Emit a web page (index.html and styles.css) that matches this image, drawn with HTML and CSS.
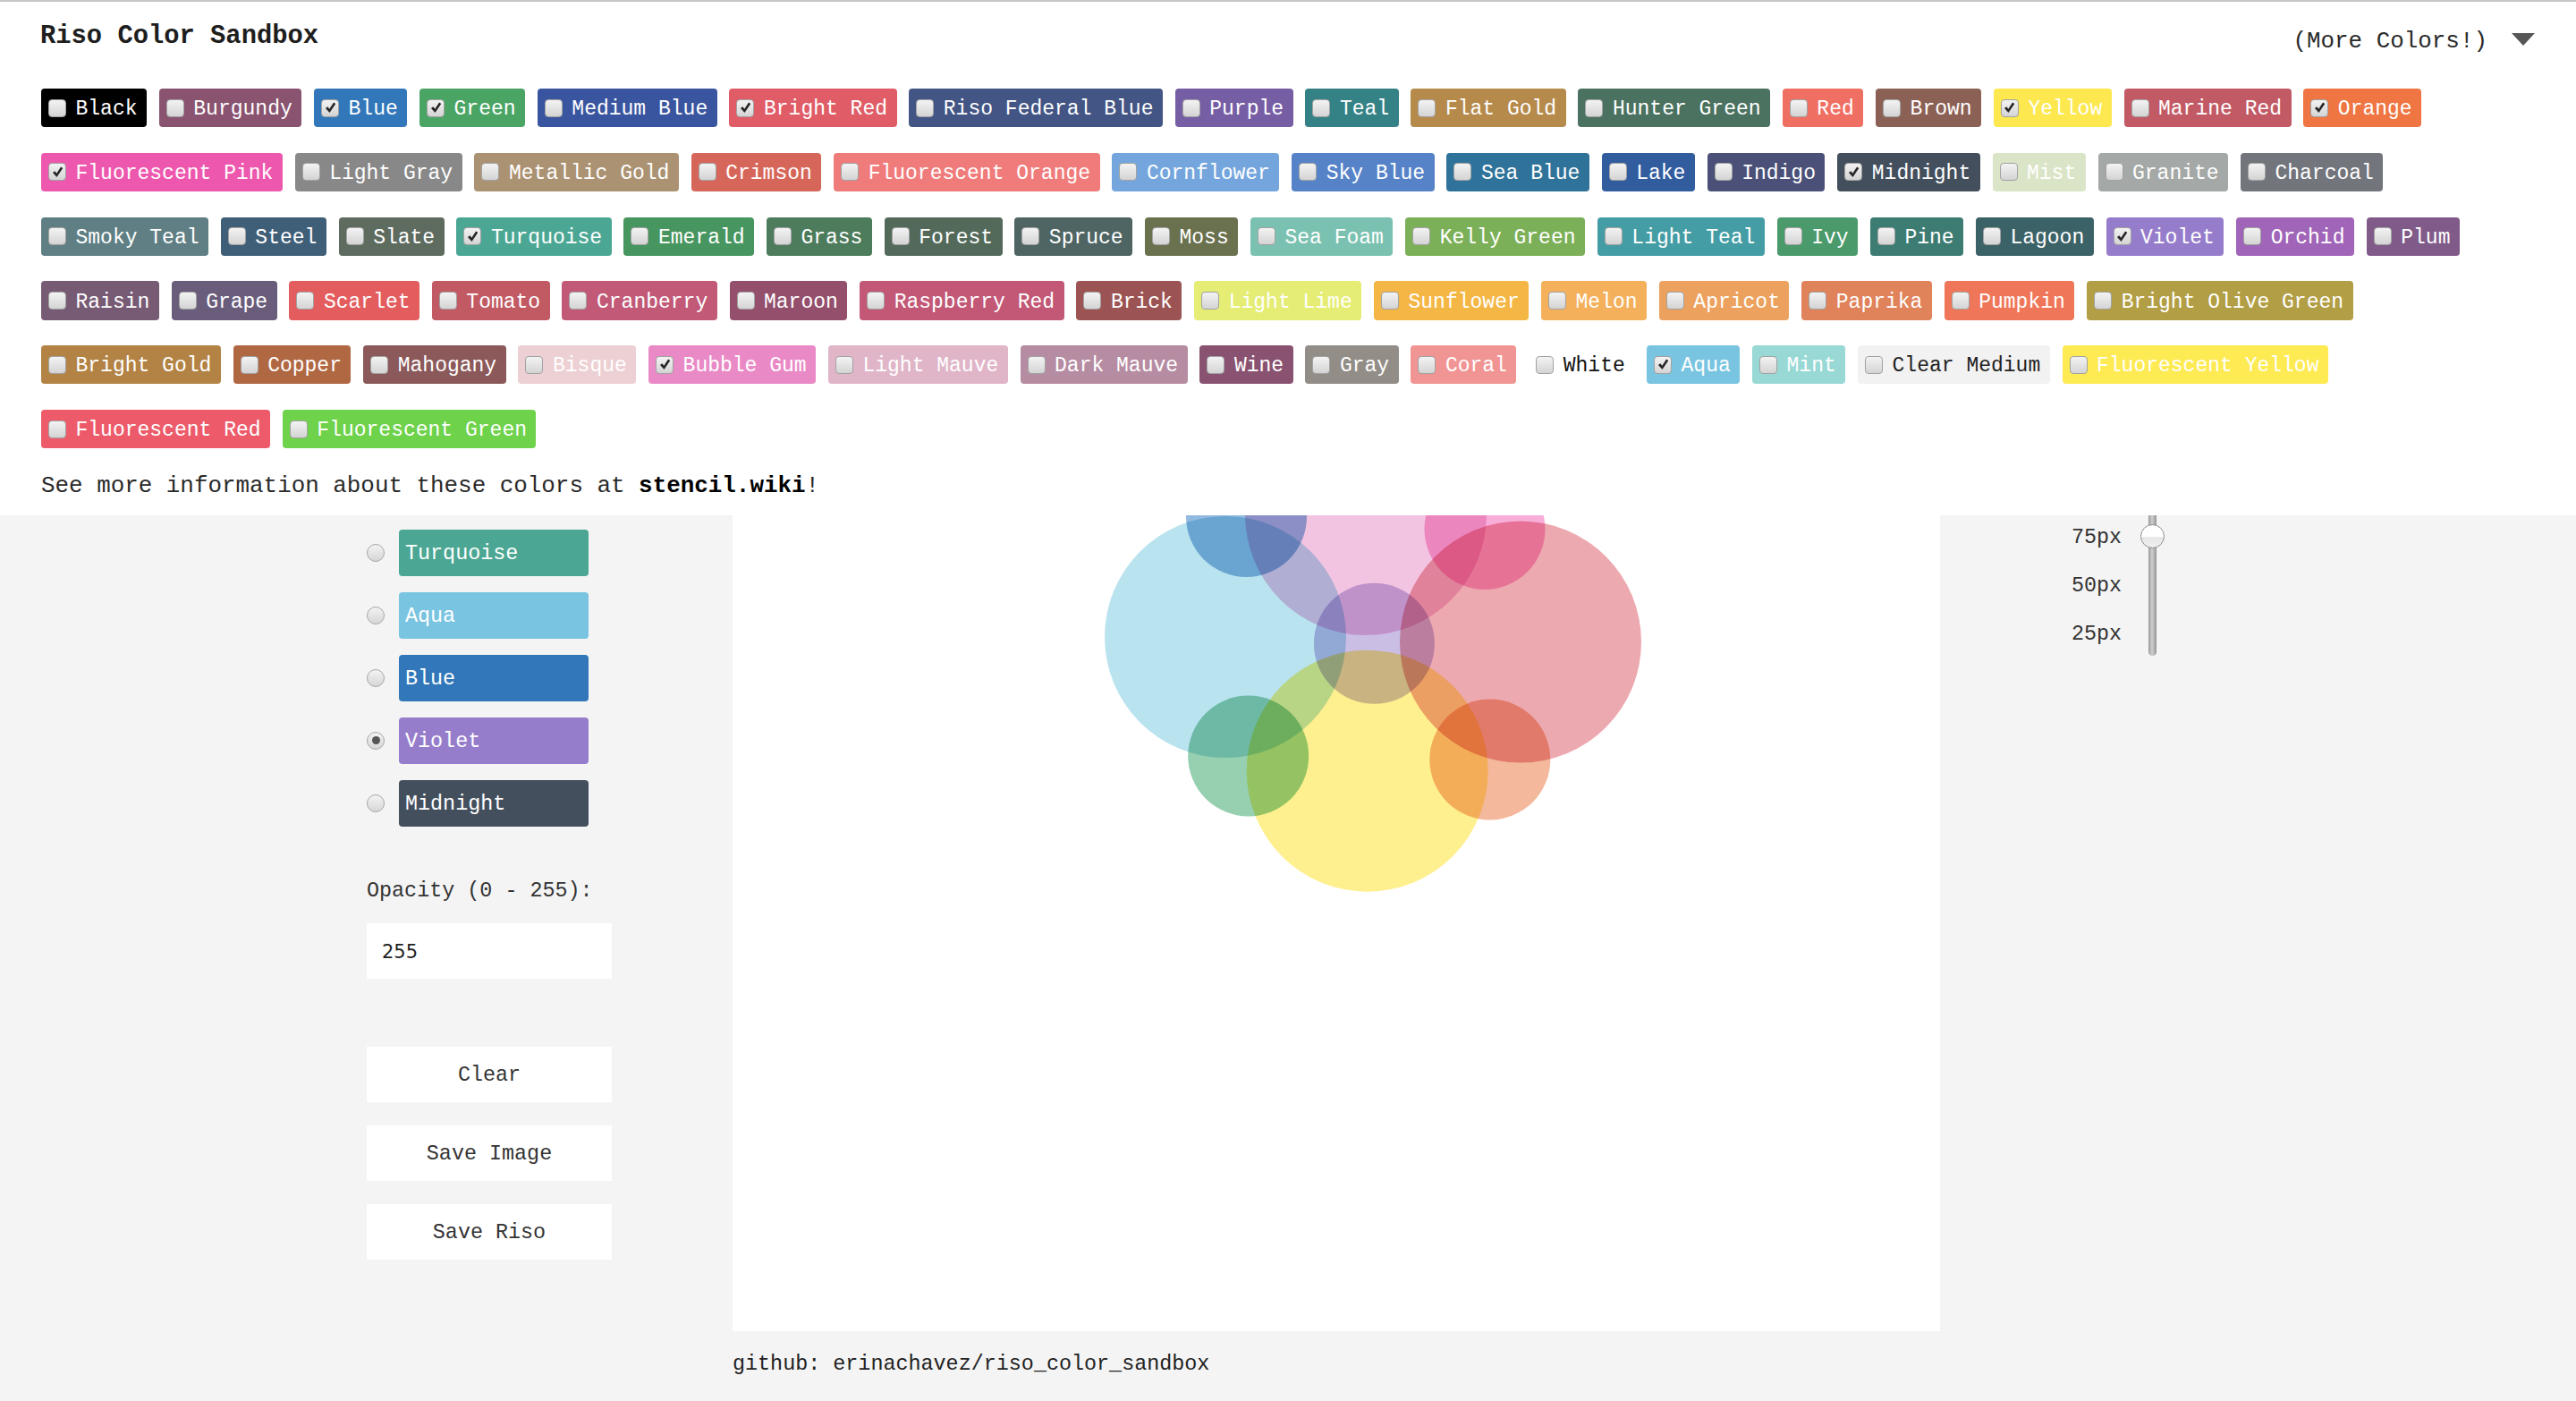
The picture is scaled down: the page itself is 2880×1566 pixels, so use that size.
FILE: index.html
```html
<!DOCTYPE html>
<html lang="en">
<head>
<meta charset="utf-8">
<title>Riso Color Sandbox</title>
<link rel="stylesheet" href="styles.css">
</head>
<body>
<header class="header">
  <div class="top">
    <h1 class="title">Riso Color Sandbox</h1>
    <div class="more"><span class="more-text">(More Colors!)</span><span class="tri"></span></div>
  </div>
  <div class="chips">
    <label class="chip c-black"><span class="cb"></span>Black</label>
    <label class="chip c-burgundy"><span class="cb"></span>Burgundy</label>
    <label class="chip c-blue"><span class="cb on"><svg viewBox="0 0 20 20"><path d="M3.5 10.5 L6.2 8.4 L8.6 11.6 L14.2 2.8 L16.8 4.6 L8.8 16.4 Z"/></svg></span>Blue</label>
    <label class="chip c-green"><span class="cb on"><svg viewBox="0 0 20 20"><path d="M3.5 10.5 L6.2 8.4 L8.6 11.6 L14.2 2.8 L16.8 4.6 L8.8 16.4 Z"/></svg></span>Green</label>
    <label class="chip c-medblue"><span class="cb"></span>Medium Blue</label>
    <label class="chip c-brightred"><span class="cb on"><svg viewBox="0 0 20 20"><path d="M3.5 10.5 L6.2 8.4 L8.6 11.6 L14.2 2.8 L16.8 4.6 L8.8 16.4 Z"/></svg></span>Bright Red</label>
    <label class="chip c-federal"><span class="cb"></span>Riso Federal Blue</label>
    <label class="chip c-purple"><span class="cb"></span>Purple</label>
    <label class="chip c-teal"><span class="cb"></span>Teal</label>
    <label class="chip c-flatgold"><span class="cb"></span>Flat Gold</label>
    <label class="chip c-hunter"><span class="cb"></span>Hunter Green</label>
    <label class="chip c-red"><span class="cb"></span>Red</label>
    <label class="chip c-brown"><span class="cb"></span>Brown</label>
    <label class="chip c-yellow"><span class="cb on"><svg viewBox="0 0 20 20"><path d="M3.5 10.5 L6.2 8.4 L8.6 11.6 L14.2 2.8 L16.8 4.6 L8.8 16.4 Z"/></svg></span>Yellow</label>
    <label class="chip c-marine"><span class="cb"></span>Marine Red</label>
    <label class="chip c-orange"><span class="cb on"><svg viewBox="0 0 20 20"><path d="M3.5 10.5 L6.2 8.4 L8.6 11.6 L14.2 2.8 L16.8 4.6 L8.8 16.4 Z"/></svg></span>Orange</label>

    <label class="chip c-fpink"><span class="cb on"><svg viewBox="0 0 20 20"><path d="M3.5 10.5 L6.2 8.4 L8.6 11.6 L14.2 2.8 L16.8 4.6 L8.8 16.4 Z"/></svg></span>Fluorescent Pink</label>
    <label class="chip c-lightgray"><span class="cb"></span>Light Gray</label>
    <label class="chip c-metgold"><span class="cb"></span>Metallic Gold</label>
    <label class="chip c-crimson"><span class="cb"></span>Crimson</label>
    <label class="chip c-forange"><span class="cb"></span>Fluorescent Orange</label>
    <label class="chip c-cornflower"><span class="cb"></span>Cornflower</label>
    <label class="chip c-skyblue"><span class="cb"></span>Sky Blue</label>
    <label class="chip c-seablue"><span class="cb"></span>Sea Blue</label>
    <label class="chip c-lake"><span class="cb"></span>Lake</label>
    <label class="chip c-indigo"><span class="cb"></span>Indigo</label>
    <label class="chip c-midnight"><span class="cb on"><svg viewBox="0 0 20 20"><path d="M3.5 10.5 L6.2 8.4 L8.6 11.6 L14.2 2.8 L16.8 4.6 L8.8 16.4 Z"/></svg></span>Midnight</label>
    <label class="chip c-mist"><span class="cb"></span>Mist</label>
    <label class="chip c-granite"><span class="cb"></span>Granite</label>
    <label class="chip c-charcoal"><span class="cb"></span>Charcoal</label>

    <label class="chip c-smoky"><span class="cb"></span>Smoky Teal</label>
    <label class="chip c-steel"><span class="cb"></span>Steel</label>
    <label class="chip c-slate"><span class="cb"></span>Slate</label>
    <label class="chip c-turquoise"><span class="cb on"><svg viewBox="0 0 20 20"><path d="M3.5 10.5 L6.2 8.4 L8.6 11.6 L14.2 2.8 L16.8 4.6 L8.8 16.4 Z"/></svg></span>Turquoise</label>
    <label class="chip c-emerald"><span class="cb"></span>Emerald</label>
    <label class="chip c-grass"><span class="cb"></span>Grass</label>
    <label class="chip c-forest"><span class="cb"></span>Forest</label>
    <label class="chip c-spruce"><span class="cb"></span>Spruce</label>
    <label class="chip c-moss"><span class="cb"></span>Moss</label>
    <label class="chip c-seafoam"><span class="cb"></span>Sea Foam</label>
    <label class="chip c-kelly"><span class="cb"></span>Kelly Green</label>
    <label class="chip c-lteal"><span class="cb"></span>Light Teal</label>
    <label class="chip c-ivy"><span class="cb"></span>Ivy</label>
    <label class="chip c-pine"><span class="cb"></span>Pine</label>
    <label class="chip c-lagoon"><span class="cb"></span>Lagoon</label>
    <label class="chip c-violet"><span class="cb on"><svg viewBox="0 0 20 20"><path d="M3.5 10.5 L6.2 8.4 L8.6 11.6 L14.2 2.8 L16.8 4.6 L8.8 16.4 Z"/></svg></span>Violet</label>
    <label class="chip c-orchid"><span class="cb"></span>Orchid</label>
    <label class="chip c-plum"><span class="cb"></span>Plum</label>

    <label class="chip c-raisin"><span class="cb"></span>Raisin</label>
    <label class="chip c-grape"><span class="cb"></span>Grape</label>
    <label class="chip c-scarlet"><span class="cb"></span>Scarlet</label>
    <label class="chip c-tomato"><span class="cb"></span>Tomato</label>
    <label class="chip c-cranberry"><span class="cb"></span>Cranberry</label>
    <label class="chip c-maroon"><span class="cb"></span>Maroon</label>
    <label class="chip c-raspberry"><span class="cb"></span>Raspberry Red</label>
    <label class="chip c-brick"><span class="cb"></span>Brick</label>
    <label class="chip c-lightlime"><span class="cb"></span>Light Lime</label>
    <label class="chip c-sunflower"><span class="cb"></span>Sunflower</label>
    <label class="chip c-melon"><span class="cb"></span>Melon</label>
    <label class="chip c-apricot"><span class="cb"></span>Apricot</label>
    <label class="chip c-paprika"><span class="cb"></span>Paprika</label>
    <label class="chip c-pumpkin"><span class="cb"></span>Pumpkin</label>
    <label class="chip c-olive"><span class="cb"></span>Bright Olive Green</label>

    <label class="chip c-brightgold"><span class="cb"></span>Bright Gold</label>
    <label class="chip c-copper"><span class="cb"></span>Copper</label>
    <label class="chip c-mahogany"><span class="cb"></span>Mahogany</label>
    <label class="chip c-bisque"><span class="cb"></span>Bisque</label>
    <label class="chip c-bubblegum"><span class="cb on"><svg viewBox="0 0 20 20"><path d="M3.5 10.5 L6.2 8.4 L8.6 11.6 L14.2 2.8 L16.8 4.6 L8.8 16.4 Z"/></svg></span>Bubble Gum</label>
    <label class="chip c-lmauve"><span class="cb"></span>Light Mauve</label>
    <label class="chip c-dmauve"><span class="cb"></span>Dark Mauve</label>
    <label class="chip c-wine"><span class="cb"></span>Wine</label>
    <label class="chip c-gray"><span class="cb"></span>Gray</label>
    <label class="chip c-coral"><span class="cb"></span>Coral</label>
    <label class="chip c-white"><span class="cb"></span>White</label>
    <label class="chip c-aqua"><span class="cb on"><svg viewBox="0 0 20 20"><path d="M3.5 10.5 L6.2 8.4 L8.6 11.6 L14.2 2.8 L16.8 4.6 L8.8 16.4 Z"/></svg></span>Aqua</label>
    <label class="chip c-mint"><span class="cb"></span>Mint</label>
    <label class="chip c-clear"><span class="cb"></span>Clear Medium</label>
    <label class="chip c-fyellow"><span class="cb"></span>Fluorescent Yellow</label>

    <label class="chip c-fred"><span class="cb"></span>Fluorescent Red</label>
    <label class="chip c-fgreen"><span class="cb"></span>Fluorescent Green</label>
  </div>
  <p class="info">See more information about these colors at <b>stencil.wiki</b>!</p>
</header>

<main class="main">
  <aside class="left">
    <div class="pick"><span class="radio"></span><span class="swatch c-turquoise">Turquoise</span></div>
    <div class="pick"><span class="radio"></span><span class="swatch c-aqua">Aqua</span></div>
    <div class="pick"><span class="radio"></span><span class="swatch c-blue">Blue</span></div>
    <div class="pick"><span class="radio sel"></span><span class="swatch c-violet">Violet</span></div>
    <div class="pick"><span class="radio"></span><span class="swatch c-midnight">Midnight</span></div>
    <div class="op-label">Opacity (0 - 255):</div>
    <div class="op-input">255</div>
    <div class="btn btn-first">Clear</div>
    <div class="btn">Save Image</div>
    <div class="btn">Save Riso</div>
  </aside>

  <section class="center">
    <div class="canvas">
      <svg class="art" width="1350" height="912" viewBox="0 0 1350 912">
        <circle cx="551" cy="136" r="135" fill="#b9e3ef"/>
        <circle cx="708" cy="-1" r="135" fill="#f3c4e1"/>
        <circle cx="574.5" cy="1.5" r="67.5" fill="#92bae0"/>
        <circle cx="841" cy="15.5" r="67.5" fill="#f8aed9"/>
        <circle cx="881" cy="141.5" r="135" fill="#eda9b0"/>
        <circle cx="717.4" cy="143.3" r="67.5" fill="#cabee5"/>
        <circle cx="709.7" cy="285.7" r="135" fill="#fef08f"/>
        <circle cx="576.7" cy="269" r="67.5" fill="#96d0b0"/>
        <circle cx="846.8" cy="273" r="67.5" fill="#f4b89c"/>
      </svg>
    </div>
    <p class="foot">github: erinachavez/riso_color_sandbox</p>
  </section>

  <aside class="right">
    <div class="sizes">
      <div>75px</div>
      <div>50px</div>
      <div>25px</div>
    </div>
    <div class="track"><span class="thumb"></span></div>
  </aside>
</main>
</body>
</html>
```
FILE: styles.css
```css
* { box-sizing: border-box; }

html, body {
  margin: 0;
  padding: 0;
}

body {
  background: #f4f4f4;
  font-family: "Liberation Mono", "DejaVu Sans Mono", monospace;
  color: #222;
  width: 2880px;
  height: 1566px;
  overflow: hidden;
}

/* ---------- header ---------- */
.header {
  position: relative;
  z-index: 2;
  background: #fff;
  border-top: 2px solid #c6c6c6;
  padding: 18.6px 46px 12.9px 46px;
  height: 576px;
}

.top {
  display: flex;
  justify-content: space-between;
  align-items: flex-start;
  height: 45.2px;
}

.title {
  margin: 0 0 0 -1px;
  font-size: 28.8px;
  line-height: 40px;
  font-weight: bold;
  color: #1e1e1e;
}

.more {
  display: flex;
  align-items: center;
  gap: 27px;
  margin-top: 5.2px;
  height: 40px;
}

.more-text {
  font-size: 25.9px;
  line-height: 40px;
  color: #2a2a2a;
}

.tri {
  width: 0;
  height: 0;
  border-left: 13px solid transparent;
  border-right: 13px solid transparent;
  border-top: 14px solid #565656;
  margin-bottom: 3.6px;
}

.chips {
  display: flex;
  flex-wrap: wrap;
  column-gap: 13.8px;
  row-gap: 28.4px;
  margin-top: 33.2px;
}

.chip {
  display: flex;
  align-items: center;
  height: 43.4px;
  padding: 3px 10.5px 0 8px;
  border-radius: 4px;
  color: #fff;
  font-size: 23px;
  white-space: pre;
}

.cb {
  display: inline-flex;
  align-items: center;
  justify-content: center;
  width: 20px;
  height: 20px;
  margin: -3px 10.5px 0 0;
  border: 1.5px solid #a2a2a2;
  border-radius: 4px;
  background: linear-gradient(#f3f3f3, #d4d4d4);
  flex: none;
}

.cb svg {
  width: 17px;
  height: 17px;
  fill: #262626;
}

.info {
  margin: 21.7px 0 0 0;
  font-size: 25.9px;
  line-height: 40px;
  color: #2a2a2a;
}

.info b { color: #000; }

/* ---------- colours ---------- */
.c-black { background: #000000; }
.c-burgundy { background: #8a5370; }
.c-blue { background: #3177b9; }
.c-green { background: #4aa564; }
.c-medblue { background: #3a55a0; }
.c-brightred { background: #e05c67; }
.c-federal { background: #435584; }
.c-purple { background: #765ea5; }
.c-teal { background: #358286; }
.c-flatgold { background: #b68a4b; }
.c-hunter { background: #4b7260; }
.c-red { background: #f06f63; }
.c-brown { background: #8c6155; }
.c-yellow { background: #fde84f; }
.c-marine { background: #c25a65; }
.c-orange { background: #ef7542; }

.c-fpink { background: #ed58ae; }
.c-lightgray { background: #888888; }
.c-metgold { background: #ab9272; }
.c-crimson { background: #d7665a; }
.c-forange { background: #f07b7b; }
.c-cornflower { background: #74a6dd; }
.c-skyblue { background: #5683c8; }
.c-seablue { background: #30739a; }
.c-lake { background: #315d9f; }
.c-indigo { background: #4a5077; }
.c-midnight { background: #434f5d; }
.c-mist { background: #dae4c6; }
.c-granite { background: #a4a8a6; }
.c-charcoal { background: #72757c; }

.c-smoky { background: #5f7f84; }
.c-steel { background: #3f5e78; }
.c-slate { background: #5e6b5f; }
.c-turquoise { background: #4ba793; }
.c-emerald { background: #47955f; }
.c-grass { background: #4c7c5c; }
.c-forest { background: #536a5b; }
.c-spruce { background: #4e6563; }
.c-moss { background: #6a714e; }
.c-seafoam { background: #7bc1b1; }
.c-kelly { background: #7cb058; }
.c-lteal { background: #449da4; }
.c-ivy { background: #4a9a6b; }
.c-pine { background: #3c7c72; }
.c-lagoon { background: #3b6267; }
.c-violet { background: #967dcb; }
.c-orchid { background: #a064b8; }
.c-plum { background: #805b8a; }

.c-raisin { background: #775a74; }
.c-grape { background: #6a5d7c; }
.c-scarlet { background: #e35d5f; }
.c-tomato { background: #c15a63; }
.c-cranberry { background: #c15977; }
.c-maroon { background: #944f6c; }
.c-raspberry { background: #c25776; }
.c-brick { background: #9b5453; }
.c-lightlime { background: #e5ed74; }
.c-sunflower { background: #f4b645; }
.c-melon { background: #f4b05a; }
.c-apricot { background: #eca25e; }
.c-paprika { background: #e0825a; }
.c-pumpkin { background: #ef7658; }
.c-olive { background: #b29e44; }

.c-brightgold { background: #b38345; }
.c-copper { background: #b06843; }
.c-mahogany { background: #8b595a; }
.c-bisque { background: #ecd0d3; }
.c-bubblegum { background: #e98ac6; }
.c-lmauve { background: #e0b5c8; }
.c-dmauve { background: #b68ca2; }
.c-wine { background: #8a5271; }
.c-gray { background: #928d87; }
.c-coral { background: #f19494; }
.c-white { background: #ffffff; color: #111; }
.c-aqua { background: #79c4e1; }
.c-mint { background: #98d8d5; }
.c-clear { background: #f2f2f2; color: #222; }
.c-fyellow { background: #feea52; }

.c-fred { background: #ed5b6b; }
.c-fgreen { background: #6ed24b; }

/* ---------- main ---------- */
.main {
  display: flex;
  align-items: flex-start;
  height: 990px;
}

.left {
  width: 819px;
  flex: none;
  padding: 16px 0 0 410px;
}

.pick {
  display: flex;
  align-items: center;
  gap: 16px;
  margin-bottom: 18.3px;
}

.pick:nth-child(5) { margin-bottom: 0; }

.radio {
  width: 20px;
  height: 20px;
  border-radius: 50%;
  border: 1.5px solid #a6a6a6;
  background: linear-gradient(#f3f3f3, #d6d6d6);
  display: flex;
  align-items: center;
  justify-content: center;
  flex: none;
}

.radio.sel::after {
  content: "";
  width: 9px;
  height: 9px;
  border-radius: 50%;
  background: #555;
}

.swatch {
  display: flex;
  align-items: center;
  width: 211.7px;
  height: 51.7px;
  padding: 3px 0 0 7px;
  border-radius: 4px;
  color: #fff;
  font-size: 23.4px;
}

.op-label {
  margin-top: 57px;
  font-size: 23.4px;
  line-height: 30px;
  color: #333;
}

.op-input {
  margin-top: 21.6px;
  width: 274px;
  height: 61.7px;
  background: #fff;
  padding: 2px 0 0 17px;
  display: flex;
  align-items: center;
  font-family: "DejaVu Sans", "Liberation Sans", sans-serif;
  font-size: 21px;
  color: #222;
}

.btn {
  margin-top: 26px;
  width: 274px;
  height: 62px;
  background: #fff;
  padding-top: 3px;
  display: flex;
  align-items: center;
  justify-content: center;
  font-size: 23.4px;
  color: #333;
}

.btn-first { margin-top: 76px; }

.center {
  width: 1350px;
  flex: none;
}

.canvas {
  height: 912px;
  background: #fff;
  overflow: hidden;
}

.art {
  display: block;
  isolation: isolate;
}

.art circle { mix-blend-mode: multiply; }

.foot {
  margin: 22.4px 0 0 0;
  font-size: 23.4px;
  line-height: 30px;
  color: #222;
}

.right {
  flex: 1;
  display: flex;
  align-items: flex-start;
  padding-left: 147px;
}

.sizes {
  margin-top: -1.6px;
  width: 56px;
  font-size: 23.4px;
  line-height: 54px;
  color: #333;
  white-space: nowrap;
}

.track {
  position: relative;
  margin-left: 30px;
  width: 8.7px;
  height: 157px;
  border-radius: 0 0 4.5px 4.5px;
  background: linear-gradient(90deg, #9a9a9a, #cfcfcf 45%, #b4b4b4 70%, #959595);
}

.thumb {
  position: absolute;
  left: -9.2px;
  top: 10px;
  width: 27px;
  height: 27px;
  border-radius: 50%;
  border: 1.5px solid #8e8e8e;
  background: linear-gradient(#ffffff 50%, #e6e6e6 55%, #f0f0f0);
}
```
